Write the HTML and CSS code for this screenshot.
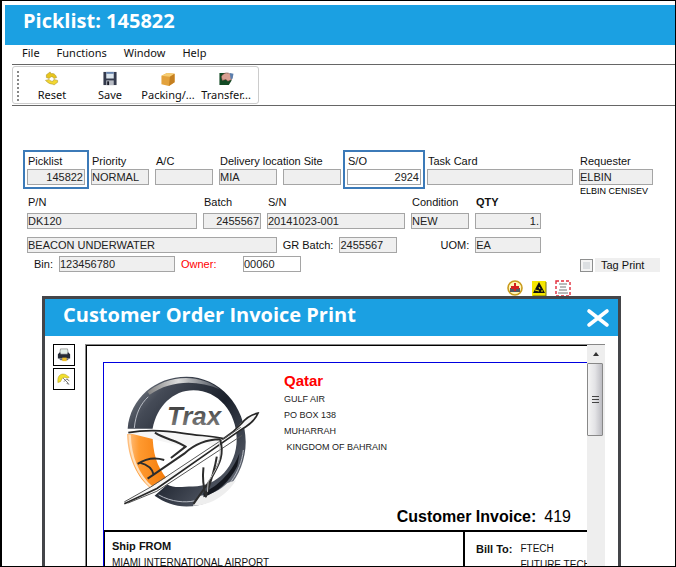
FILE: index.html
```html
<!DOCTYPE html>
<html lang="en">
<head>
<meta charset="utf-8">
<title>Picklist: 145822</title>
<link rel="stylesheet" href="styles.css">
</head>
<body>
<div class="window">
  <header class="titlebar"><h1>Picklist: 145822</h1></header>
  <nav class="menubar">
    <button type="button">File</button>
    <button type="button">Functions</button>
    <button type="button">Window</button>
    <button type="button">Help</button>
  </nav>
  <div class="toolstrip">
    <div class="toolbar">
      <span class="grip"></span>
      <button type="button">
        <svg viewBox="0 0 16 16"><path d="M2 4l4-3 1 2c3-1 5 1 6 4l-3 1C9 6 8 6 7 6L5 8 2 7z" fill="#e8c51c" stroke="#9c8420" stroke-width=".5"/><path d="M14 12l-4 3-1-1c-3 0-5-1-8-4l4-1c1 2 3 2 4 2l1-2 4 1z" fill="#f3d731" stroke="#9c8420" stroke-width=".5"/></svg>
        <span>Reset</span>
      </button>
      <button type="button">
        <svg viewBox="0 0 16 16"><path d="M1 1h14v14H1z" fill="#343a4c"/><path d="M4 1h8v7H4z" fill="#dce6ee"/><path d="M4 1h8v2H4z" fill="#6682ac"/><path d="M4 10h8v5H4z" fill="#b8bcc4"/><path d="M5 11h2v4H5z" fill="#1a1d28"/></svg>
        <span>Save</span>
      </button>
      <button type="button">
        <svg viewBox="0 0 16 16"><path d="M1 5l6-3 8 1v9l-6 4-8-2z" fill="#e3a23c"/><path d="M1 5l6-3 8 1-5 3z" fill="#f6cd72"/><path d="M10 6l5-3v9l-6 4z" fill="#c47f20"/></svg>
        <span>Packing/...</span>
      </button>
      <button type="button">
        <svg viewBox="0 0 16 16"><path d="M1 2h9l4 8-3 5H1z" fill="#134a24"/><path d="M3 6c2-4 6-5 9-3l3 1-1 5-4 2-2-2-4 1z" fill="#d9a092" stroke="#703c38" stroke-width=".5"/><path d="M12 2l4 1-1 5-2 1z" fill="#5c7fae"/></svg>
        <span>Transfer...</span>
      </button>
    </div>
  </div>

  <form class="form">
    <div class="row row-head">
      <div class="field marked"><label for="picklist">Picklist</label><input id="picklist" class="num" value="145822" readonly></div>
      <div class="field"><label for="priority">Priority</label><input id="priority" value="NORMAL" readonly></div>
      <div class="field"><label for="ac">A/C</label><input id="ac" readonly></div>
      <div class="field"><label for="delivery">Delivery location Site</label><input id="delivery" value="MIA" readonly></div>
      <div class="field"><input id="site" aria-label="Site" readonly></div>
      <div class="field marked"><label for="so">S/O</label><input id="so" class="num open" value="2924"></div>
      <div class="field"><label for="task">Task Card</label><input id="task" readonly></div>
      <div class="field"><label for="requester">Requester</label><input id="requester" value="ELBIN" readonly></div>
      <span class="fullname">ELBIN CENISEV</span>
    </div>
    <div class="row row-part">
      <div class="field"><label for="pn">P/N</label><input id="pn" value="DK120" readonly></div>
      <div class="field"><label for="batch">Batch</label><input id="batch" class="num" value="2455567" readonly></div>
      <div class="field"><label for="sn">S/N</label><input id="sn" value="20141023-001" readonly></div>
      <div class="field"><label for="cond">Condition</label><input id="cond" value="NEW" readonly></div>
      <div class="field"><label for="qty"><b>QTY</b></label><input id="qty" class="num" value="1." readonly></div>
    </div>
    <div class="row row-desc">
      <input aria-label="Description" value="BEACON UNDERWATER" readonly>
      <label class="end" for="gr">GR Batch:</label><input id="gr" value="2455567" readonly>
      <label class="end" for="uom">UOM:</label><input id="uom" value="EA" readonly>
    </div>
    <div class="row row-bin">
      <label class="end" for="bin">Bin:</label><input id="bin" value="123456780" readonly>
      <label class="owner" for="owner">Owner:</label><input id="owner" class="open" value="00060">
      <span></span>
      <div class="tag"><input type="checkbox" id="tag"><label for="tag">Tag Print</label></div>
    </div>
    <div class="flags">
      <svg viewBox="0 0 16 16"><circle cx="8" cy="8" r="7" fill="#fff5b8" stroke="#c99a1c" stroke-width="1.6"/><path d="M3 8h10v4H3z" fill="#55585f"/><path d="M7 3h2v3h3v3H9v2H7V9H4V6h3z" fill="#d3201f"/></svg>
      <svg viewBox="0 0 16 16"><path d="M1 1h14v15H1z" fill="#f5e600"/><path d="M8 2l6 11H2z" fill="#111"/><path d="M4 10l4 1M8 7l1 2M10 11h2" stroke="#f5e600"/><path d="M15 2v14H2" fill="none" stroke="#7d780c"/></svg>
      <svg viewBox="0 0 16 16"><path d="M1 1h14v15H1z" fill="#fff" stroke="#e22b3a" stroke-width="1.4" stroke-dasharray="3 2"/><path d="M4 4h8M5 7h6M4 10h8M3 13h10" stroke="#777"/></svg>
    </div>
  </form>

  <section class="dialog">
    <header class="dialog-title">
      <h2>Customer Order Invoice Print</h2>
      <button type="button" aria-label="Close"><svg viewBox="0 0 24 20"><path d="M3 3l18 14M21 3L3 17" stroke="#fff" stroke-width="3.6" stroke-linecap="round"/></svg></button>
    </header>
    <div class="dialog-body">
      <div class="side">
        <button type="button" aria-label="Print"><svg viewBox="0 0 16 16"><path d="M4 1h8l1 6H3z" fill="#e4efe8" stroke="#777" stroke-width=".7"/><path d="M1 7l2-2h1v2h8V5h1l2 2v5H1z" fill="#262b37"/><path d="M2 12h12l-2 2H4z" fill="#666c78"/><path d="M6 11h5v4H6z" fill="#edbd26"/></svg></button>
        <button type="button" aria-label="Export"><svg viewBox="0 0 16 16"><path d="M1 9c0-5 4-8 9-6l4 3-2 1-3-1-3 1-2 4-3 1z" fill="#f0df2e" stroke="#b59d1c" stroke-width=".6"/><path d="M7 7l6 6M8 11l3-3 3 2M11 13l3 1" stroke="#666" fill="none"/></svg></button>
      </div>
      <div class="viewer">
        <div class="paper">
          <div class="sheet">
            <div class="letterhead">
              <svg class="logo" viewBox="55 45 415 405">
                <defs>
                  <linearGradient id="steel" x1="0" y1="0" x2="1" y2="1"><stop offset="0" stop-color="#8f949c"/><stop offset=".2" stop-color="#454b57"/><stop offset=".5" stop-color="#1a202b"/><stop offset=".8" stop-color="#4c525e"/><stop offset="1" stop-color="#c9cbd0"/></linearGradient>
                  <linearGradient id="shine" x1="0" y1="0" x2="1" y2="0"><stop offset="0" stop-color="#777"/><stop offset=".45" stop-color="#ddd"/><stop offset="1" stop-color="#444a55"/></linearGradient>
                  <linearGradient id="amber" x1="0" y1="0" x2="1" y2="0"><stop offset="0" stop-color="#ffc48a"/><stop offset=".3" stop-color="#ff9a30"/><stop offset="1" stop-color="#f47a08"/></linearGradient>
                  <linearGradient id="ink" x1="0" y1="0" x2="0" y2="1"><stop offset="0" stop-color="#333"/><stop offset="1" stop-color="#858585"/></linearGradient>
                </defs>
                <path fill="url(#steel)" fill-rule="evenodd" d="M72 206C80 115 155 50 249 50c98 0 178 87 178 195s-80 195-178 195c-36 0-68-12-96-32l38-34c22 12 45 6 77 6 74 0 132-62 132-143S344 90 270 90c-62 0-110 48-123 116z"/>
                <path fill="url(#shine)" d="M122 104C190 40 290 40 350 88c-70-30-150-28-212 16l-6-8z"/>
                <path d="M92 204c4-42 18-72 42-94M420 270c-8 70-50 125-110 155M165 405c40 22 80 24 108 18" fill="none" stroke="#b9bdc5" stroke-width="3"/>
                <path d="M268 438l20-30c40-5 62-18 84-39l26-8c-26 42-72 75-130 77z" fill="#eee"/>
                <path d="M300 412c44-16 78-46 102-94l6-38c-18 50-60 98-108 118z" fill="#14171e"/>
                <path d="M70 222l77-2c0 58 12 100 44 138l-46 30C100 354 72 294 70 222z" fill="url(#amber)"/>
                <path d="M78 224c2 65 24 120 66 158" stroke="#ffe0bd" stroke-width="7" fill="none"/>
                <text x="190" y="194" font-family="Liberation Sans, sans-serif" font-size="78" font-weight="700" font-style="italic" fill="url(#ink)">Trax</text>
                <path d="M72 218c50-10 100-9 150 2 54 8 105 10 136 12l42-29c22-25 42-42 64-46-8 20-28 39-46 49L160 390l-98 44v-8l80-45 192-118c-26-21-52-16-88-1z" fill="#f6f6f6"/>
                <path d="M74 218c54-10 110-7 166 2 48 8 84 6 120 16 24-15 40-30 54-45 14-18 32-28 50-32-8 20-28 37-50 49L160 386 62 432" fill="none" stroke="#262626" stroke-width="5"/>
                <path d="M62 426l80-45L412 202M72 430l88-36 256-168" fill="none" stroke="#555" stroke-width="3"/>
                <path d="M154 218c30 20 66 23 92 42l-44 34M350 238c-48 0-80 18-108 43l-92 63-18 12M102 312c30-20 54-20 80-12M108 308c24 6 38 16 42 36M350 238c16 54-10 84-28 120l-52 74M340 290c-6 40-18 76-34 122M300 322c-4 34 0 62 8 90" fill="none" stroke="#2c2c2c" stroke-width="6"/>
                <path d="M346 242c14 58-10 88-32 124l-2 30" fill="none" stroke="#bbb" stroke-width="3"/>
              </svg>
              <address>
                <strong>Qatar</strong>
                <span>GULF AIR</span>
                <span>PO BOX 138</span>
                <span>MUHARRAH</span>
                <span>&nbsp;KINGDOM OF BAHRAIN</span>
              </address>
            </div>
            <p class="invoice"><b>Customer Invoice:</b><span>419</span></p>
            <div class="parties">
              <div class="from"><b>Ship FROM</b><span>MIAMI INTERNATIONAL AIRPORT</span></div>
              <div class="to"><b>Bill To:</b><div><span>FTECH</span><span>FUTURE TECH</span></div></div>
            </div>
          </div>
        </div>
        <div class="scroll">
          <span class="arrow"></span>
          <span class="thumb"><i></i></span>
        </div>
      </div>
    </div>
  </section>
</div>
</body>
</html>
```
FILE: styles.css
```css
* { box-sizing: border-box; }
body { margin: 0; font: 11px/14px "Liberation Sans", Arial, sans-serif; color: #111; background: #fff; }
button { font: inherit; color: inherit; background: none; border: 0; padding: 0; }
h1, h2, p { margin: 0; }
svg { display: block; }

.window { height: 100vh; display: flex; flex-direction: column; overflow: hidden; border: 1px solid #000; border-left-width: 2px; padding: 4px 0 0 3px; }
.titlebar { flex: none; height: 40px; padding: 0 18px; background: #1ba0e2; color: #fff; }
h1, h2 { font: 700 20px/32px "Open Sans", "Segoe UI", sans-serif; }

.menubar, .toolbar { font-family: "Noto Sans", Tahoma, sans-serif; }
.menubar { flex: none; display: flex; gap: 17px; height: 20px; margin-left: 7px; padding: 0 10px; border-bottom: 1px solid #666; line-height: 16px; }
.menubar button { height: 16px; }
.toolstrip { flex: none; margin-left: 7px; padding: 1px 0; border-bottom: 1px solid #666; }
.toolbar { display: flex; width: max-content; height: 38px; padding: 0 3px 0 4px; border: 1px solid #ccc; border-radius: 3px; }
.grip { width: 6px; margin: 4px 0 2px; border-left: 2px dotted #888; }
.toolbar button { width: 58px; display: flex; flex-direction: column; align-items: center; gap: 1px; padding-top: 4px; line-height: 16px; }
.toolbar svg { width: 16px; height: 16px; }

.form { flex: none; padding: 48px 22px 0; }
.row { display: grid; column-gap: 6px; }
.row-head { grid-template-columns: 58fr 58fr 58fr 58fr 58fr 74fr 146fr 74fr; }
.row-part { grid-template-columns: 170fr 58fr 138fr 58fr 66fr 106fr; }
.row-desc { grid-template-columns: 250fr 50fr 58fr 66fr 66fr 106fr; margin-top: 8px; }
.row-bin { grid-template-columns: 26fr 116fr 56fr 58fr 266fr 74fr; margin-top: 3px; }
.field { min-width: 0; display: flex; flex-direction: column; justify-content: flex-end; }
.field label { height: 15px; padding-left: 1px; white-space: nowrap; }
.row-part .field label { height: 16px; line-height: 10px; }
.row > label { line-height: 16px; white-space: nowrap; }
.row > .end { text-align: right; }
.form input:not([type]) { width: 100%; min-width: 0; height: 16px; margin: 0; padding: 0 1px 0 0; border: 1px solid #a5a5a5; border-radius: 0; background: #efefef; font: inherit; color: #222; outline: 0; }
.form input:not([type]).open { background: #fff; }
.form input.num { text-align: right; }
.marked { outline: 2px solid #3c7ab8; outline-offset: 2px; z-index: 1; }
.fullname { grid-column: 8; font-size: 9px; line-height: 12px; padding-left: 1px; color: #000; white-space: nowrap; }
.row .owner { color: #f00; }
.tag { display: flex; align-items: flex-end; gap: 2px; white-space: nowrap; margin-right: -7px; }
.tag input { appearance: none; width: 13px; height: 13px; margin: 0 0 0 1px; border: 1px solid #8e8f8f; background: #dcdfe2; box-shadow: inset 0 0 0 2px #f4f4f4; }
.tag label { flex: 1; padding-left: 6px; background: #efefef; }
.flags { display: flex; justify-content: flex-end; gap: 8px; padding-right: 82px; margin-top: 8px; }
.flags svg { width: 16px; height: 16px; }

.dialog { flex: 1; min-height: 0; display: flex; flex-direction: column; margin: 0 54px 0 37px; border: 3px solid #444549; border-bottom: 0; }
.dialog-title { flex: none; height: 37px; display: flex; justify-content: space-between; padding: 0 8px 0 18px; background: #1ba0e2; color: #fff; }
.dialog-title svg { width: 24px; height: 20px; }
.dialog-body { flex: 1; min-height: 0; display: flex; gap: 10px; padding: 8px 13px 0 8px; }
.side { display: flex; flex-direction: column; gap: 2px; }
.side button { width: 22px; height: 22px; border: 1px solid #000; padding: 3px; }
.viewer { flex: 1; min-width: 0; display: flex; border: solid #888; border-width: 1px 0 0 1px; }
.paper { flex: 1; min-width: 0; overflow: hidden; padding: 16px 0 0 16px; border: solid #000; border-width: 1px 0 0 1px; }
.sheet { border: solid #0000e0; border-width: 1px 0 0 1px; }
.letterhead { display: flex; gap: 24px; height: 142px; padding: 12px 0 0 18px; }
.logo { flex: none; width: 138px; height: 135px; }
address { font: 9px/16px "Liberation Sans", Arial, sans-serif; color: #222; }
address span, address strong { display: block; }
address strong { font-size: 15px; margin: -2px 0 2px; color: #f00; }
.invoice { display: flex; justify-content: flex-end; gap: 8px; padding: 2px 16px 0 0; height: 25px; font-size: 16px; line-height: 20px; color: #000; }
.parties { display: grid; grid-template-columns: 358fr 124fr; border: solid #000; border-width: 2px 0 0 1px; font-size: 10px; line-height: 16px; white-space: nowrap; }
.parties b { font-size: 11px; }
.parties span { display: block; }
.from { min-width: 0; padding: 6px 0 0 7px; }
.to { min-width: 0; display: flex; gap: 8px; padding: 9px 0 0 11px; border-left: 2px solid #000; }
.scroll { flex: none; width: 18px; background: #eee; display: flex; flex-direction: column; }
.arrow { height: 18px; display: grid; place-items: center; }
.arrow::before { content: ""; border: solid transparent; border-width: 0 3px 4px; border-bottom-color: #333; }
.thumb { height: 73px; margin-right: 2px; border: 1px solid #888; border-radius: 1px; background: linear-gradient(90deg, #f4f4f4, #e3e3e6 50%, #bcbcc2); display: grid; place-items: center; }
.thumb i { width: 7px; height: 8px; background: repeating-linear-gradient(#444 0 1px, transparent 1px 3px); }
```
